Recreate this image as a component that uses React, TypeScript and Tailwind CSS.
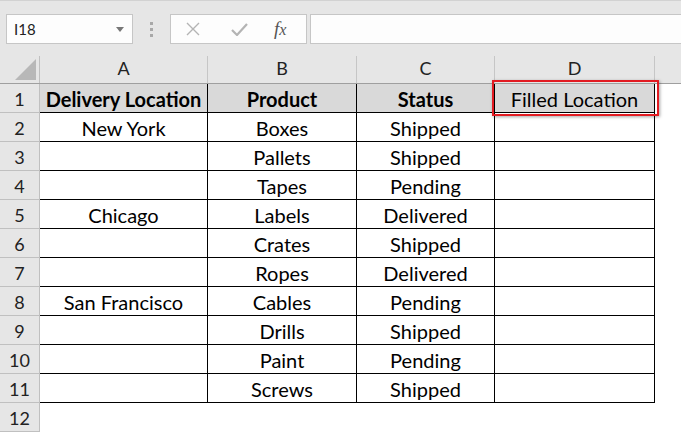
import React from "react";

const cols = [
  { key: "A", w: "w-[168px]" },
  { key: "B", w: "w-[149px]" },
  { key: "C", w: "w-[138px]" },
  { key: "D", w: "w-[160px]" },
];

const data: [string, string, string, string][] = [
  ["New York", "Boxes", "Shipped", ""],
  ["", "Pallets", "Shipped", ""],
  ["", "Tapes", "Pending", ""],
  ["Chicago", "Labels", "Delivered", ""],
  ["", "Crates", "Shipped", ""],
  ["", "Ropes", "Delivered", ""],
  ["San Francisco", "Cables", "Pending", ""],
  ["", "Drills", "Shipped", ""],
  ["", "Paint", "Pending", ""],
  ["", "Screws", "Shipped", ""],
];

const font = { fontFamily: "Lato, 'Noto Sans', sans-serif" };

export default function App() {
  return (
    <div className="w-[681px] h-[433px] overflow-hidden bg-white text-black" style={font}>
      {/* Toolbar */}
      <div className="h-[56px] bg-[#e6e6e6] border-t border-[#d2d2d2] flex items-start pt-[13px]">
        <div className="ml-[6px] w-[127px] h-[30px] bg-[#fdfdfd] border border-[#c6c6c6] flex items-center justify-between pl-[7px] pr-[8px]">
          <span className="text-[15px] text-[#222]">I18</span>
          <svg width="8" height="5" viewBox="0 0 8 5"><path d="M0 0h8L4 5z" fill="#777" /></svg>
        </div>
        <div className="w-[37px] h-[30px] flex flex-col items-center justify-center gap-[3px]">
          <span className="w-[3px] h-[3px] bg-[#a8a8a8]" />
          <span className="w-[3px] h-[3px] bg-[#a8a8a8]" />
          <span className="w-[3px] h-[3px] bg-[#a8a8a8]" />
        </div>
        <div className="w-[137px] h-[30px] bg-[#fdfdfd] border border-[#c6c6c6] flex items-center">
          <svg className="ml-[15px]" width="14" height="14" viewBox="0 0 14 14">
            <path d="M1 1L13 13M13 1L1 13" stroke="#b4b4b4" strokeWidth="1.4" />
          </svg>
          <svg className="ml-[31px]" width="17" height="13" viewBox="0 0 17 13">
            <path d="M1 7L6 12L16 1" stroke="#b4b4b4" strokeWidth="2.2" fill="none" />
          </svg>
          <span
            className="ml-[26px] text-[19px] italic text-[#555]"
            style={{ fontFamily: "'Liberation Serif', serif" }}
          >
            f<span className="text-[16px]">x</span>
          </span>
        </div>
        <div className="ml-[3px] flex-1 h-[30px] bg-[#fdfdfd] border-y border-l border-[#c6c6c6]" />
      </div>

      {/* Column headers */}
      <div className="flex h-[28px] bg-[#e6e6e6] border-b border-[#9f9f9f]">
        <div className="w-[40px] border-r border-[#c0c0c0] relative">
          <svg className="absolute right-[3px] bottom-[3px]" width="21" height="21" viewBox="0 0 21 21">
            <path d="M21 0V21H0z" fill="#b8b8b8" />
          </svg>
        </div>
        {cols.map((c) => (
          <div
            key={c.key}
            className={`${c.w} border-r border-[#c6c6c6] flex items-end justify-center pb-[1px] text-[18px] text-[#222]`}
          >
            {c.key}
          </div>
        ))}
        <div className="flex-1" />
      </div>

      {/* Row 1 */}
      <div className="flex h-[29px]">
        <div className="w-[40px] bg-[#e6e6e6] border-r border-b border-[#c0c0c0] flex items-center justify-center pt-[2px] text-[18px] text-[#222]">
          1
        </div>
        <div className="w-[168px] bg-[#d9d9d9] border-r border-b border-black flex items-center justify-center pt-[2px] text-[20px] font-bold">
          Delivery Location
        </div>
        <div className="w-[149px] bg-[#d9d9d9] border-r border-b border-black flex items-center justify-center pt-[2px] text-[20px] font-bold">
          Product
        </div>
        <div className="w-[138px] bg-[#d9d9d9] border-r border-b border-black flex items-center justify-center pt-[2px] text-[20px] font-bold">
          Status
        </div>
        <div className="w-[160px] bg-[#d9d9d9] border-r border-b border-black flex items-center justify-center pt-[2px] text-[20px] relative">
          Filled Location
          <div className="absolute left-[-3px] right-[-5px] top-[-4px] bottom-[-4px] border-2 border-[#e21b22] shadow-[1px_1px_3px_rgba(0,0,0,0.35)]" />
        </div>
      </div>

      {data.map((r, i) => (
        <div key={i} className="flex h-[29px]">
          <div className="w-[40px] bg-[#e6e6e6] border-r border-b border-[#c0c0c0] flex items-center justify-center pt-[2px] text-[18px] text-[#222]">
            {i + 2}
          </div>
          {r.map((v, j) => (
            <div
              key={j}
              className={`${cols[j].w} border-r border-b border-black flex items-center justify-center pt-[2px] text-[20px]`}
            >
              {v}
            </div>
          ))}
        </div>
      ))}

      <div className="flex h-[29px]">
        <div className="w-[40px] bg-[#e6e6e6] border-r border-b border-[#c0c0c0] flex items-center justify-center pt-[2px] text-[18px] text-[#222]">
          12
        </div>
      </div>
    </div>
  );
}
